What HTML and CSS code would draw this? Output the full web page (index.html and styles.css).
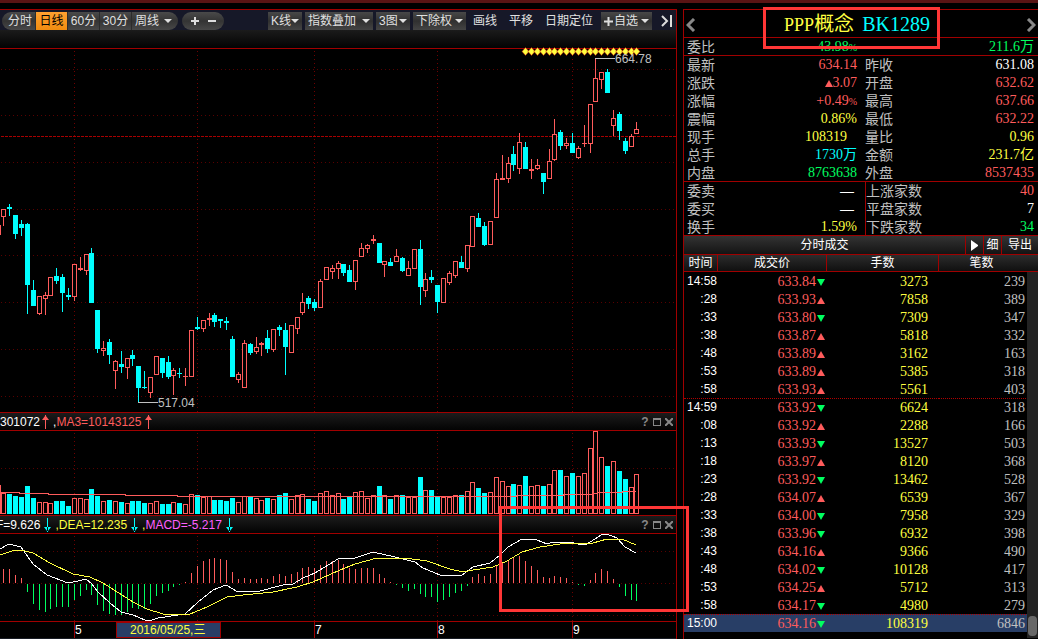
FILE: index.html
```html
<!DOCTYPE html>
<html lang="zh-CN">
<head>
<meta charset="utf-8">
<title>PPP概念 BK1289</title>
<link rel="stylesheet" href="styles.css">
</head>
<body>
<div class="strip"></div>
<div class="layout">
  <main class="charts">
    <nav class="toolbar" aria-label="图表工具">
      <div class="pill periods">
        <button class="seg" type="button">分时</button>
        <button class="seg active" type="button">日线</button>
        <button class="seg" type="button">60分</button>
        <button class="seg" type="button">30分</button>
        <div class="drop seg-drop"><select aria-label="周期"><option>周线</option></select></div>
      </div>
      <div class="pill zoom">
        <button type="button" aria-label="放大"><svg width="10" height="10"><path d="M5 1v8M1 5h8" stroke="#ddd" stroke-width="2"/></svg></button>
        <button type="button" aria-label="缩小"><svg width="10" height="10"><path d="M1 5h8" stroke="#ddd" stroke-width="2"/></svg></button>
      </div>
      <div class="tools">
        <div class="drop short"><select aria-label="K线类型"><option>K线</option></select></div>
        <div class="drop long"><select aria-label="叠加"><option>指数叠加</option></select></div>
        <div class="drop short"><select aria-label="图数"><option>3图</option></select></div>
        <div class="drop medium"><select aria-label="复权"><option>下除权</option></select></div>
        <button class="plain" type="button">画线</button>
        <button class="plain" type="button">平移</button>
        <button class="plain" type="button">日期定位</button>
        <button class="add" type="button"><svg width="9" height="9"><path d="M4.500 0v9M0 4.500h9" stroke="#ddd" stroke-width="2"/></svg>自选<i class="caret"></i></button>
        <button class="end" type="button" aria-label="收起"><svg width="12" height="12"><path d="M1 1l5 5-5 5M10 0v12" fill="none" stroke="#ddd" stroke-width="2"/></svg></button>
      </div>
    </nav>
    <div class="band"></div>
    <section class="panel price"><svg id="price" role="img" aria-label="日线"></svg></section>
    <header class="head">
      <span class="white">301072</span><svg class="arrow up near" width="7" height="14"><path d="M3 0h1v14H3zM0 5l3-4h1l3 4z"/></svg>
      <span class="red"><span class="white">,</span>MA3=10143125</span><svg class="arrow up" width="7" height="14"><path d="M3 0h1v14H3zM0 5l3-4h1l3 4z"/></svg>
      <div class="icons">
        <button type="button" aria-label="帮助">?</button>
        <button type="button" aria-label="最大化"><svg width="8" height="8"><path d="M0 0h8v8H0zM1 2v5h6V2z" fill="#888" fill-rule="evenodd"/></svg></button>
        <button type="button" aria-label="关闭"><svg width="8" height="8"><path d="M0 0l8 8M8 0l-8 8" stroke="#888" stroke-width="2"/></svg></button>
      </div>
    </header>
    <section class="panel volume"><svg id="volume" role="img" aria-label="成交量"></svg></section>
    <div class="macd-block">
      <header class="head cut">
        <span class="white">F=9.626</span><svg class="arrow down" width="7" height="14"><path d="M3 0h1v14H3zM0 9l3 4h1l3-4z"/></svg>
        <span class="yellow">,DEA=12.235</span><svg class="arrow down" width="7" height="14"><path d="M3 0h1v14H3zM0 9l3 4h1l3-4z"/></svg>
        <span class="magenta"><span class="yellow">,</span>MACD=-5.217</span><svg class="arrow down" width="7" height="14"><path d="M3 0h1v14H3zM0 9l3 4h1l3-4z"/></svg>
        <div class="icons">
          <button type="button" aria-label="帮助">?</button>
          <button type="button" aria-label="最大化"><svg width="8" height="8"><path d="M0 0h8v8H0zM1 2v5h6V2z" fill="#888" fill-rule="evenodd"/></svg></button>
          <button type="button" aria-label="关闭"><svg width="8" height="8"><path d="M0 0l8 8M8 0l-8 8" stroke="#888" stroke-width="2"/></svg></button>
        </div>
      </header>
      <section class="panel macd"><svg id="macd" role="img" aria-label="MACD"></svg></section>
      <div class="mark mark-macd"></div>
    </div>
    <div class="panel axis"><svg id="axis"></svg></div>
  </main>

  <aside class="side">
    <header class="title">
      <button type="button" aria-label="上一个"><svg width="10" height="14"><path d="M8 1L2 7l6 6" fill="none" stroke="#888" stroke-width="3"/></svg></button>
      <h1><span class="name"><span class="latin">PPP</span>概念</span><span class="code">BK1289</span></h1>
      <button type="button" aria-label="下一个"><svg width="10" height="14"><path d="M2 1l6 6-6 6" fill="none" stroke="#888" stroke-width="3"/></svg></button>
      <div class="mark mark-title"></div>
    </header>
    <dl class="quotes ratio">
      <div><dt>委比</dt><dd class="green">43.98<small>%</small></dd></div>
      <div><dt></dt><dd class="green">211.6<b>万</b></dd></div>
    </dl>
    <dl class="quotes main">
      <div><dt>最新</dt><dd class="red">634.14</dd></div><div><dt>昨收</dt><dd class="white">631.08</dd></div>
      <div><dt>涨跌</dt><dd class="red"><i class="tri up"></i>3.07</dd></div><div><dt>开盘</dt><dd class="red">632.62</dd></div>
      <div><dt>涨幅</dt><dd class="red">+0.49<small>%</small></dd></div><div><dt>最高</dt><dd class="red">637.66</dd></div>
      <div><dt>震幅</dt><dd class="yellow">0.86%</dd></div><div><dt>最低</dt><dd class="red">632.22</dd></div>
      <div><dt>现手</dt><dd class="yellow inset">108319</dd></div><div><dt>量比</dt><dd class="yellow">0.96</dd></div>
      <div><dt>总手</dt><dd class="cyan">1730<b>万</b></dd></div><div><dt>金额</dt><dd class="yellow">231.7<b>亿</b></dd></div>
      <div><dt>内盘</dt><dd class="green">8763638</dd></div><div><dt>外盘</dt><dd class="red">8537435</dd></div>
    </dl>
    <dl class="quotes split">
      <div><dt>委卖</dt><dd class="white dash">—</dd></div><div><dt>上涨家数</dt><dd class="red">40</dd></div>
      <div><dt>委买</dt><dd class="white dash">—</dd></div><div><dt>平盘家数</dt><dd class="white">7</dd></div>
      <div><dt>换手</dt><dd class="yellow">1.59%</dd></div><div><dt>下跌家数</dt><dd class="green">34</dd></div>
    </dl>
    <div class="ticks-head">
      <h2>分时成交</h2>
      <button type="button" aria-label="展开"><svg width="7" height="11"><path d="M0 0l7 5v1l-7 5z" fill="#fff"/></svg></button>
      <button type="button">细</button>
      <button class="wide" type="button">导出</button>
    </div>
    <div class="ticks">
      <table>
        <colgroup><col class="c-time"><col class="c-price"><col class="c-vol"><col></colgroup>
        <thead><tr><th>时间</th><th>成交价</th><th>手数</th><th>笔数</th></tr></thead>
        <tbody>
          <tr><td>14:58</td><td>633.84<i class="tri down"></i></td><td>3273</td><td>239</td></tr>
          <tr><td>:28</td><td>633.93<i class="tri up"></i></td><td>7858</td><td>389</td></tr>
          <tr><td>:33</td><td>633.80<i class="tri down"></i></td><td>7309</td><td>347</td></tr>
          <tr><td>:38</td><td>633.87<i class="tri up"></i></td><td>5818</td><td>332</td></tr>
          <tr><td>:48</td><td>633.89<i class="tri up"></i></td><td>3162</td><td>163</td></tr>
          <tr><td>:53</td><td>633.89<i class="tri up"></i></td><td>5385</td><td>318</td></tr>
          <tr><td>:58</td><td>633.93<i class="tri up"></i></td><td>5561</td><td>403</td></tr>
          <tr class="minute"><td>14:59</td><td>633.92<i class="tri down"></i></td><td>6624</td><td>318</td></tr>
          <tr><td>:08</td><td>633.92<i class="tri up"></i></td><td>2288</td><td>166</td></tr>
          <tr><td>:13</td><td>633.93<i class="tri down"></i></td><td>13527</td><td>503</td></tr>
          <tr><td>:18</td><td>633.97<i class="tri up"></i></td><td>8120</td><td>368</td></tr>
          <tr><td>:23</td><td>633.92<i class="tri down"></i></td><td>13462</td><td>528</td></tr>
          <tr><td>:28</td><td>634.07<i class="tri up"></i></td><td>6539</td><td>367</td></tr>
          <tr><td>:33</td><td>634.00<i class="tri down"></i></td><td>7958</td><td>329</td></tr>
          <tr><td>:38</td><td>633.96<i class="tri down"></i></td><td>6932</td><td>398</td></tr>
          <tr><td>:43</td><td>634.16<i class="tri up"></i></td><td>9366</td><td>490</td></tr>
          <tr><td>:48</td><td>634.02<i class="tri down"></i></td><td>10128</td><td>417</td></tr>
          <tr><td>:53</td><td>634.25<i class="tri up"></i></td><td>5712</td><td>313</td></tr>
          <tr><td>:58</td><td>634.17<i class="tri down"></i></td><td>4980</td><td>279</td></tr>
          <tr class="minute current"><td>15:00</td><td>634.16<i class="tri down"></i></td><td>108319</td><td>6846</td></tr>
        </tbody>
      </table>
      <div class="scroll"><div class="thumb"></div></div>
    </div>
  </aside>
</div>
<script src="script.js"></script>
</body>
</html>
```
FILE: styles.css
```css
* { box-sizing: border-box; }
body {
  margin: 0;
  min-height: 100vh;
  display: flex;
  flex-direction: column;
  background: #000;
  color: #c0c0c0;
  font: 12px/18px "Liberation Sans", "Noto Sans CJK SC", sans-serif;
  overflow: hidden;
}
button, select {
  margin: 0;
  padding: 0;
  border: 0;
  border-radius: 0;
  background: none;
  color: inherit;
  font: inherit;
  appearance: none;
}
h1, h2, dl, dd { margin: 0; font-weight: 400; }
svg { display: block; }

.red { color: #ff5c5c; }
.green { color: #00ff60; }
.yellow { color: #ffff40; }
.cyan { color: #00ffff; }
.white { color: #fff; }
.magenta { color: #ff60ff; }

.strip { height: 9px; background: linear-gradient(#5a1414 3px, #000 3px); }
.layout { flex: 1; display: flex; gap: 6px; }
.charts {
  flex: 1;
  min-width: 0;
  display: flex;
  flex-direction: column;
  border-top: 1px solid #a00000;
  border-right: 1px solid #a00000;
}

/* Toolbar */
.toolbar {
  height: 20px;
  display: flex;
  align-items: flex-end;
  padding: 0 2px;
  background: #161828;
  color: #e0e0e0;
}
.pill {
  height: 18px;
  display: flex;
  overflow: hidden;
  border-radius: 9px;
  background: linear-gradient(#4a4a4a, #343434 50%, #484848);
}
.periods { width: 176px; margin-right: 4px; }
.seg { width: 32px; border-right: 1px solid #2c2c2c; white-space: nowrap; }
.seg:first-child { width: 34px; padding-left: 3px; }
.seg.active { background: linear-gradient(#ffa030, #f08c10); color: #000; }
.seg-drop { flex: 1; }
.zoom { width: 42px; padding: 0 4px; }
.zoom button { flex: 1; display: flex; align-items: center; justify-content: center; }
.tools { display: flex; gap: 3px; margin-left: auto; }
.drop { position: relative; height: 18px; }
.tools .drop, .add { background: linear-gradient(#484848, #303030 50%, #444); }
.drop select { width: 100%; height: 18px; padding: 0 0 0 3px; }
.short { width: 34px; }
.medium { width: 53px; }
.long { width: 68px; }
.drop::after, .caret {
  border: 4px solid transparent;
  border-top-color: #e0e0e0;
  border-bottom: 0;
}
.drop::after { content: ""; position: absolute; right: 3px; top: 7px; pointer-events: none; }
.seg-drop::after { right: 6px; }
.plain { padding: 0 4px; margin-right: 1px; }
.add { width: 51px; display: flex; align-items: center; padding: 0 3px; gap: 1px; white-space: nowrap; }
.caret { margin-left: auto; }
.end { display: flex; align-items: center; padding: 0 1px 0 6px; }
.band { height: 19px; border-bottom: 1px solid #a00000; background: linear-gradient(#1b1b1b, #030303); }

/* Chart panels */
.panel svg { width: 100%; height: 100%; shape-rendering: crispEdges; }
.price { flex: 1; min-height: 0; position: relative; }
.price svg { position: absolute; overflow: visible; }
.volume { height: 84px; }
.macd { height: 87px; }
.axis { height: 18px; border-top: 1px solid #a00000; border-bottom: 1px solid #181c24; }
.head {
  height: 19px;
  display: flex;
  align-items: center;
  overflow: hidden;
  border-top: 1px solid #a00000;
  border-bottom: 1px solid #a00000;
  background: linear-gradient(#1c1c1c, #030303);
  white-space: nowrap;
}
.head.cut > span:first-child { margin-left: -4px; }
.arrow { margin: 0 4px; }
.arrow.near { margin-left: 2px; }
.arrow.up { fill: #ff5c5c; }
.arrow.down { fill: #00ffff; }
.icons { margin-left: auto; display: flex; gap: 4px; padding-right: 3px; }
.icons button { width: 8px; display: flex; align-items: center; justify-content: center; color: #888; font-weight: 700; }
.macd-block { position: relative; }
.mark { position: absolute; border: 3px solid #ff3636; pointer-events: none; }
.mark-macd { top: -9px; bottom: 9px; right: -13px; width: 190px; z-index: 2; }

/* Quote panel */
.side {
  width: 355px;
  border-top: 1px solid #a00000;
  border-left: 1px solid #a00000;
}
.title {
  position: relative;
  height: 28px;
  display: flex;
  align-items: center;
  justify-content: space-between;
  padding: 2px 2px 0 2px;
  border-bottom: 1px solid #a00000;
}
.title h1 { display: flex; align-items: baseline; gap: 8px; font: 20px/24px "Liberation Serif", "Noto Sans CJK SC", serif; padding-right: 8px; }
.latin { font-size: 18px; }
.name { color: #ffff40; }
.code { color: #00ffff; }
.mark-title { left: 79px; top: -3px; width: 177px; height: 42px; z-index: 2; }
.quotes {
  display: grid;
  grid-template-columns: 173px 1fr;
  padding: 0 4px 0 0;
  border-bottom: 1px solid #a00000;
  font: 14px/18px "Liberation Serif", "Noto Sans CJK SC", serif;
}
.quotes > div { display: flex; justify-content: space-between; height: 18px; padding-left: 3px; }
.quotes > div:nth-child(even) { padding-left: 8px; }
.quotes b { font-weight: 400; line-height: 1px; }
.quotes small { font-size: 10px; line-height: 1px; }
.quotes dt, .quotes b { font-family: "Noto Sans CJK SC", sans-serif; }
.quotes dt { line-height: 16px; }
.ratio > div { height: 17px; }
.split { background: linear-gradient(#a00000, #a00000) 181px 0 / 1px 100% no-repeat; }
.split > div:nth-child(even) { padding-left: 9px; }
.main > div:nth-last-child(-n+2), .split > div:nth-last-child(-n+2) { height: 17px; }
.quotes .inset { padding-right: 10px; }
.quotes .dash { font-family: "Liberation Sans", sans-serif; padding-right: 3px; }

.tri { display: inline-block; border: 4px solid transparent; }
.tri.up { border-top: 0; border-bottom: 7px solid #ff5c5c; }
.tri.down { border-bottom: 0; border-top: 7px solid #00ff60; }

.ticks-head {
  height: 19px;
  display: flex;
  color: #fff;
  border-bottom: 1px solid #a00000;
  background: linear-gradient(#333, #141414);
}
.ticks-head h2 { flex: 1; font-size: 12px; line-height: 18px; text-align: center; }
.ticks-head button { width: 18px; display: flex; align-items: center; justify-content: center; border-left: 1px solid #a00000; }
.ticks-head .wide { width: 37px; }
.ticks { position: relative; }
.ticks table { width: 100%; table-layout: fixed; border-spacing: 0; }
.c-time { width: 34px; }
.c-price { width: 109px; }
.c-vol { width: 112px; }
.ticks th {
  height: 17px;
  padding: 0;
  border-right: 1px solid #a00000;
  border-bottom: 1px solid #a00000;
  background: linear-gradient(#2c2c2c, #101010);
  color: #fff;
  font-weight: 400;
  line-height: 16px;
}
.ticks th:last-child { border-right: 0; padding-right: 14px; }
.ticks td { height: 18px; padding: 0; text-align: right; font: 14px/17px "Liberation Serif", serif; }
.ticks td:nth-child(1) { padding-right: 1px; color: #fff; font: 12px/17px "Liberation Sans", sans-serif; }
.ticks td:nth-child(2) { padding-right: 2px; color: #ff5c5c; }
.ticks td:nth-child(2) .tri { margin-left: 1px; }
.ticks td:nth-child(3) { padding-right: 11px; color: #ffff40; }
.ticks td:nth-child(4) { padding-right: 13px; color: #c0c0c0; }
.minute td { border-top: 1px dotted #b00000; }
.current td { background: #283e66; }
.scroll {
  position: absolute;
  right: 0;
  top: 17px;
  bottom: -6px;
  width: 11px;
  display: flex;
  align-items: flex-end;
  padding: 0 1px 2px;
  background: #222;
}
.thumb { width: 9px; height: 20px; border-radius: 4px; background: #686868; }
```
FILE: script.js
```js
const NS = "http://www.w3.org/2000/svg";
const RED = "#ff5c5c", CYAN = "#00ffff", GREEN = "#00ff60", YELLOW = "#ffff40";
const months = [[74, "5"], [197, ""], [314, "7"], [437, "8"], [572, "9"]];
const xOf = i => 3 + Math.ceil(i * 5.861);

function add(svg, tag, attrs, text) {
  const el = document.createElementNS(NS, tag);
  for (const k in attrs) el.setAttribute(k, attrs[k]);
  if (text) el.textContent = text;
  svg.appendChild(el);
}
function rect(svg, x, y, w, h, fill) { add(svg, "rect", { x, y, width: w, height: h, fill }); }
function box(svg, x, top, bottom, up) {
  if (up && bottom - top > 2) {
    add(svg, "rect", { x: x - 1.5, y: top + 0.5, width: 4, height: bottom - top - 1, fill: "#000", stroke: RED });
  } else {
    rect(svg, x - 2, top, 5, bottom - top, up ? RED : CYAN);
  }
}
function grid(svg, rows) {
  for (const y of rows) add(svg, "line", { x1: 1, x2: "100%", y1: y + 0.5, y2: y + 0.5, stroke: "#580000", "stroke-dasharray": "1 3" });
  for (const [x] of months) add(svg, "line", { x1: x + 0.5, x2: x + 0.5, y1: 2, y2: "100%", stroke: "#700000", "stroke-dasharray": "1 3" });
}
function line(svg, points, stroke) { add(svg, "polyline", { points, fill: "none", stroke }); }

// up/down, high, open-close top, open-close bottom, low
const candles = `r 160 160 168 177,c 155 158 160 167,c 166 166 185 190,c 171 175 179 187,c 174 175 236 265,
c 231 241 257 257,r 247 247 265 266,r 243 246 250 266,r 228 228 247 247,c 219 227 232 235,
c 225 228 244 263,c 239 246 248 251,r 215 215 248 252,r 208 219 221 222,r 205 205 222 226,
c 199 204 254 254,c 261 261 300 304,r 292 299 302 307,c 290 293 306 315,r 311 312 322 340,
c 302 315 318 324,r 309 309 319 330,c 301 306 310 317,c 317 317 339 353,c 322 338 339 340,
r 328 328 344 349,r 307 307 326 326,c 309 309 324 329,c 307 313 328 330,r 319 321 327 346,
c 319 324 325 329,r 319 327 328 337,r 281 281 328 328,c 268 278 280 281,r 271 271 280 283,
r 264 269 271 277,c 264 266 273 278,c 270 270 272 279,c 268 272 274 281,c 287 290 328 328,
r 323 325 331 334,r 291 294 339 339,c 294 295 304 306,r 288 298 303 305,r 293 294 296 307,
c 281 289 300 304,r 280 280 301 303,c 276 278 281 287,c 274 281 298 326,r 276 276 304 304,
r 268 268 280 285,r 244 253 264 266,c 247 249 255 260,c 250 253 259 262,r 230 232 259 259,
r 218 218 231 231,r 216 219 223 230,r 212 214 220 230,c 215 215 224 227,c 216 221 233 233,
r 211 211 233 241,r 194 199 208 208,r 195 196 200 204,r 186 190 192 195,c 194 194 214 214,
r 212 212 216 228,c 209 213 217 217,r 200 207 213 213,c 208 209 222 223,r 212 219 227 227,
r 200 200 220 220,c 191 200 238 256,r 224 230 242 248,c 221 228 231 234,c 236 236 253 264,
r 229 229 254 254,r 222 224 234 236,r 212 212 227 229,c 207 213 219 219,r 196 196 220 223,
r 167 167 198 198,c 164 169 178 178,c 173 177 196 197,r 172 172 196 196,r 124 130 169 169,
r 106 129 131 131,r 108 114 130 134,c 97 105 116 122,r 84 93 120 125,c 93 98 120 120,
r 110 120 122 130,r 110 116 120 121,c 124 124 133 145,r 100 112 130 130,r 70 85 111 112,
c 81 83 97 101,r 89 94 97 100,c 84 94 104 104,r 97 99 109 110,r 76 94 95 98,
r 55 55 95 104,r 10 29 53 53,r 23 23 31 40,c 20 23 44 44,r 61 69 77 87,
c 63 65 82 91,c 89 92 102 105,r 85 87 98 98,r 73 80 85 85`
  .split(",").map(s => s.trim().split(" ")).map(([k, ...v]) => [k === "r", ...v.map(Number)]);

const volumes = [21,20,18,17,28,16,12,12,11,13,13,8,16,16,15,25,18,13,14,13,12,11,13,13,11,11,13,10,10,12,
  11,10,20,19,17,18,14,14,13,16,12,18,18,16,14,16,15,19,21,15,19,20,15,13,21,23,19,21,15,17,22,23,16,19,28,
  19,15,19,19,17,17,37,24,24,17,17,17,19,19,23,32,26,21,22,37,33,28,30,29,38,28,29,28,30,44,44,38,41,38,41,
  66,83,57,48,53,43,35,27,40];

const macd = [14,14,8,5,-8,-20,-26,-28,-25,-23,-23,-23,-16,-12,-6,-11,-21,-27,-30,-31,-31,-28,-24,-25,-25,
  -20,-12,-9,-7,-3,-1,1,10,17,22,24,25,24,23,11,4,5,4,4,5,4,7,9,7,9,11,15,16,15,18,22,22,23,19,15,14,15,15,
  15,9,5,1,-1,-4,-7,-5,-10,-13,-13,-18,-16,-13,-9,-7,-2,6,9,7,9,17,20,23,25,27,22,17,13,6,5,7,6,5,1,-1,-2,
  3,10,14,12,4,-3,-12,-16,-17];

const price = document.getElementById("price");
grid(price, [20, 66, 113, 160, 206, 253, 300, 347]);
add(price, "line", { x1: 1, x2: "100%", y1: 87.5, y2: 87.5, stroke: "#a80000", "stroke-dasharray": "3 1" });
rect(price, 0, 176, 1, 10, RED);
candles.forEach(([up, high, top, bottom, low], i) => {
  const x = xOf(i);
  rect(price, x, high, 1, low - high, up ? RED : CYAN);
  box(price, x, top, bottom, up);
});
for (let i = 89; i < 109; i++) {
  const x = xOf(i) + 0.5;
  add(price, "path", { d: `M${x - 3.5} 2.5l3.500-4 3.500 4-3.500 4z`, fill: YELLOW, stroke: "#c00000", "stroke-width": 0.5, "shape-rendering": "auto" });
}
rect(price, 595, 9, 20, 1, "#c0c0c0");
rect(price, 138, 353, 20, 1, "#c0c0c0");
add(price, "text", { x: 615, y: 14, fill: "#c0c0c0" }, "664.78");
add(price, "text", { x: 158, y: 358, fill: "#c0c0c0" }, "517.04");

const volume = document.getElementById("volume");
grid(volume, [37]);
rect(volume, 0, 54, 1, 29, RED);
volumes.forEach((h, i) => box(volume, xOf(i), 83 - h, 83, candles[i][0]));
line(volume, "0,61.5 19,61.5 19,62.5 48,62.5 48,63.5 125,63.5 125,64.5 177,64.5 177,65.5 516,65.5 516,64.5 563,64.5 563,63.5 592,63.5 592,62.5 597,62.5 597,61.5 622,61.5 622,60.5 636,60.5", RED);

const osc = document.getElementById("macd");
grid(osc, [17, 49, 81]);
macd.forEach((v, i) => rect(osc, xOf(i), v > 0 ? 49 - v : 50, 1, Math.abs(v), v > 0 ? RED : GREEN));
line(osc, "0,15 9,10 21,13 33,30 47,41 68,49 78,47 86,45 92,50 98,58 110,69 121,78 133,81 145,86 152,86 158,84 185,80 198,68 213,56 226,51 238,58 260,57 283,51 293,50 303,44 315,39 338,25 355,24 373,18 395,23 415,28 423,34 440,41 462,41 473,33 490,29 500,21 508,13 522,5 537,6 547,10 553,8 570,8 578,10 587,10 602,0.5 608,0.5 617,4 625,13 636,19", "#fff");
line(osc, "0,21 15,16 25,17 33,19 50,29 73,40 90,43 103,49 133,68 147,75 163,80 190,80 207,73 227,63 243,61 273,58 297,53 313,48 340,36 355,30 377,24 405,24 427,27 450,35 463,38 473,36 493,33 507,27 522,18 540,13 567,9 593,9 607,5 622,5 636,11", YELLOW);

const axis = document.getElementById("axis");
for (const [x, label] of months) {
  if (!label) continue;
  rect(axis, x, 0, 1, 16, "#a00000");
  add(axis, "text", { x: x + 1, y: 12, fill: "#fff" }, label);
}
add(axis, "rect", { x: 116.5, y: 0.5, width: 104, height: 15, fill: "#283e66", stroke: "#a00000" });
add(axis, "text", { x: 130, y: 12, fill: YELLOW }, "2016/05/25,三");
```
